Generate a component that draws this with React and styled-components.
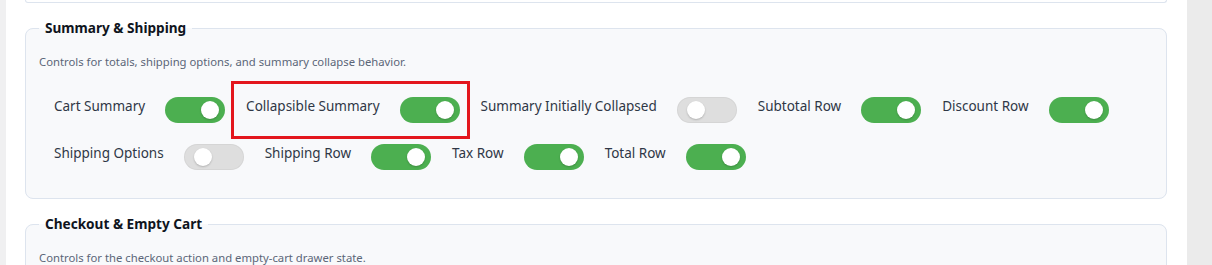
import styled, { createGlobalStyle, css } from 'styled-components';

const GlobalStyle = createGlobalStyle`
  html, body {
    margin: 0;
    background: #ffffff;
    font-family: "Segoe UI", "Noto Sans", "Open Sans", sans-serif;
    overflow: hidden;
  }
  * {
    box-sizing: border-box;
  }
`;

const Page = styled.div`
  display: flex;
  height: 265px;
  overflow: hidden;
`;

const Gutter = styled.div`
  width: 6px;
  flex: none;
  background: #f0f0f1;
`;

const Scrollbar = styled.div`
  width: 25px;
  flex: none;
  background: #ebebeb;
`;

const Main = styled.main`
  flex: 1;
  min-width: 0;
  display: flex;
  flex-direction: column;
  padding: 0 20px 0 19px;
`;

const CardTail = styled.div`
  height: 3px;
  flex: none;
  border: 1px solid #dde4ee;
  border-top: none;
  border-radius: 0 0 8px 8px;
  background: #ffffff;
`;

const Section = styled.fieldset`
  margin: 15px 0 0;
  padding: 0 13px 28px;
  min-width: 0;
  flex: none;
  border: 1px solid #dde4ee;
  border-radius: 8px;
  background: #f8f9fb;
`;

const Legend = styled.legend`
  padding: 0 6px;
  font-size: 13.6px;
  line-height: 20px;
  font-weight: 700;
  color: #0f1420;
`;

const Desc = styled.p`
  margin: 16px 0 0;
  font-size: 11.3px;
  line-height: 16px;
  color: #5b6678;
`;

const Grid = styled.div`
  display: flex;
  flex-wrap: wrap;
  column-gap: 21px;
  row-gap: 20px;
  margin-top: 26px;
  padding-left: 15px;
`;

const Item = styled.label`
  position: relative;
  display: flex;
  align-items: flex-start;
  gap: 20px;
  cursor: pointer;

  ${(p) =>
    p.$highlight &&
    css`
      &::after {
        content: '';
        position: absolute;
        top: -15px;
        bottom: -16px;
        left: -15px;
        right: -10px;
        border: 3px solid #e3161d;
        pointer-events: none;
      }
    `}
`;

const Text = styled.span`
  font-size: 13.5px;
  line-height: 20px;
  color: #2f3746;
  white-space: nowrap;
`;

const Toggle = styled.button`
  position: relative;
  flex: none;
  width: 60px;
  height: 26px;
  margin-top: 1px;
  padding: 0;
  border: none;
  border-radius: 13px;
  background: ${(p) => (p.$on ? '#4caf50' : '#dedede')};
  box-shadow: ${(p) => (p.$on ? 'none' : 'inset 0 0 0 1px rgba(0, 0, 0, 0.04)')};
  cursor: pointer;

  &::after {
    content: '';
    position: absolute;
    top: 4px;
    left: ${(p) => (p.$on ? '36px' : '10px')};
    width: 18px;
    height: 18px;
    border-radius: 50%;
    background: #ffffff;
    box-shadow: 0 1px 2px rgba(0, 0, 0, 0.2);
  }
`;

const summaryOptions = [
  { label: 'Cart Summary', on: true },
  { label: 'Collapsible Summary', on: true, highlight: true },
  { label: 'Summary Initially Collapsed', on: false },
  { label: 'Subtotal Row', on: true },
  { label: 'Discount Row', on: true },
  { label: 'Shipping Options', on: false },
  { label: 'Shipping Row', on: true },
  { label: 'Tax Row', on: true },
  { label: 'Total Row', on: true },
];

function Switch({ label, on, highlight }) {
  return (
    <Item $highlight={highlight}>
      <Text>{label}</Text>
      <Toggle type="button" role="switch" aria-checked={on} $on={on} />
    </Item>
  );
}

export default function App() {
  return (
    <>
      <GlobalStyle />
      <Page>
        <Gutter />
        <Main>
          <CardTail />
          <Section>
            <Legend>Summary &amp; Shipping</Legend>
            <Desc>Controls for totals, shipping options, and summary collapse behavior.</Desc>
            <Grid>
              {summaryOptions.map((o) => (
                <Switch key={o.label} {...o} />
              ))}
            </Grid>
          </Section>
          <Section>
            <Legend>Checkout &amp; Empty Cart</Legend>
            <Desc>Controls for the checkout action and empty-cart drawer state.</Desc>
          </Section>
        </Main>
        <Scrollbar />
      </Page>
    </>
  );
}
